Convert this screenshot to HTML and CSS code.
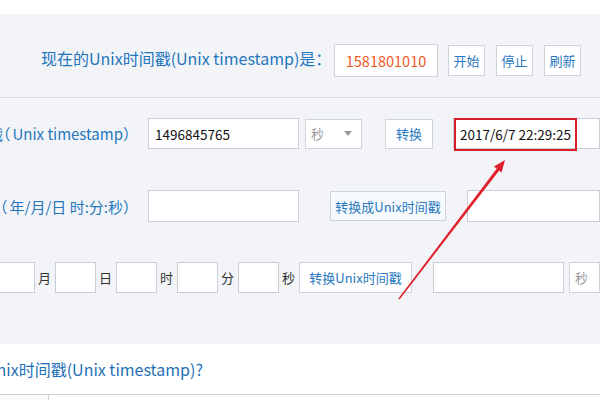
FILE: index.html
```html
<!DOCTYPE html>
<html lang="zh-CN">
<head>
<meta charset="utf-8">
<title>Unix时间戳</title>
<link rel="stylesheet" href="styles.css">
</head>
<body>
<div class="top-strip"></div>
<section class="panel">
  <div class="now-row">
    <span class="now-label">现在的Unix时间戳(Unix timestamp)是：</span>
    <div class="now-box">1581801010</div>
    <button class="btn small">开始</button>
    <button class="btn small">停止</button>
    <button class="btn small">刷新</button>
  </div>
  <div class="form">
    <div class="row row-ts">
      <div class="label"><span>Unix时间戳<span class="lp">（</span>Unix timestamp）</span></div>
      <div class="input w151">1496845765</div>
      <div class="select s57"><span>秒</span><i class="caret"></i></div>
      <button class="btn conv">转换</button>
      <div class="output">
        <div class="input out-in">2017/6/7 22:29:25</div>
        <div class="mark"></div>
      </div>
    </div>
    <div class="row row-date">
      <div class="label"><span>北京时间<span class="lp">（</span>年/月/日 时:分:秒）</span></div>
      <div class="input w151 h32"></div>
      <button class="btn wide">转换成Unix时间戳</button>
      <div class="input grow h32"></div>
    </div>
    <div class="row row-parts">
      <div class="clip"><span class="unit">年</span><div class="input part"></div></div>
      <span class="unit">月</span><div class="input part"></div>
      <span class="unit">日</span><div class="input part"></div>
      <span class="unit">时</span><div class="input part"></div>
      <span class="unit">分</span><div class="input part"></div>
      <span class="unit">秒</span>
      <button class="btn parts-btn">转换Unix时间戳</button>
      <div class="input w131"></div>
      <div class="select grow"><span>秒</span></div>
    </div>
  </div>
</section>
<section class="faq">
  <div class="faq-title"><span>什么是Unix时间戳(Unix timestamp)?</span></div>
  <div class="faq-table"><div class="faq-cell"></div><div class="faq-cell2"></div></div>
</section>
<svg class="arrow" width="600" height="400" viewBox="0 0 600 400">
  <polygon points="398.4,298.6 399.6,299.4 499.2,170.5 496.8,168.5" fill="#e0202b"/>
  <polygon points="505,160 501.6,172.4 493.9,166.6" fill="#e0202b"/>
</svg>
</body>
</html>
```

FILE: styles.css
```css
html, body {
  margin: 0;
  padding: 0;
}
body {
  width: 600px;
  height: 400px;
  overflow: hidden;
  position: relative;
  background: #ffffff;
  font-family: "Noto Sans CJK SC", "Noto Sans", sans-serif;
  color: #333;
}
.top-strip {
  height: 14px;
  background: #ffffff;
}
.panel {
  background: #f3f4f8;
  height: 330px;
}
.now-row {
  display: flex;
  align-items: center;
  padding: 30px 0 20px 41px;
  height: 33px;
  border-bottom: 1px solid #d6d9e0;
}
.now-label {
  font-size: 16px;
  color: #1f76bd;
  white-space: nowrap;
  width: 293px;
  padding-bottom: 5px;
}
.now-box {
  box-sizing: border-box;
  width: 104px;
  height: 33px;
  background: #fff;
  border: 1px solid #cfd3dc;
  color: #ee5a24;
  font-size: 14.5px;
  display: flex;
  align-items: center;
  justify-content: center;
  margin-right: 10px;
  flex-shrink: 0;
}
.btn {
  box-sizing: border-box;
  background: #fff;
  border: 1px solid #cfd3dc;
  color: #2a79be;
  font-family: "Noto Sans CJK SC", "Noto Sans", sans-serif;
  font-size: 13px;
  padding: 0;
  height: 31px;
  display: flex;
  align-items: center;
  justify-content: center;
  white-space: nowrap;
  flex-shrink: 0;
}
.btn.small {
  width: 37px;
  margin-right: 11px;
}
.form {
  padding-top: 20px;
}
.row {
  display: flex;
  align-items: center;
}
.row-ts {
  height: 31px;
}
.row-date {
  height: 32px;
  margin-top: 41px;
}
.row-parts {
  height: 31px;
  margin-top: 40px;
}
.label {
  width: 138px;
  margin-right: 10px;
  display: flex;
  justify-content: flex-end;
  overflow: hidden;
  white-space: nowrap;
  font-size: 15px;
  color: #2577bc;
  flex-shrink: 0;
}
.lp {
  font-feature-settings: "halt";
  margin-right: 2px;
}
.input {
  box-sizing: border-box;
  background: #fff;
  border: 1px solid #c9cdd7;
  height: 31px;
  font-size: 13.5px;
  color: #111;
  display: flex;
  align-items: center;
  padding-left: 6px;
  flex-shrink: 0;
  white-space: nowrap;
}
.h32 {
  height: 32px;
}
.w151 {
  width: 151px;
}
.w131 {
  width: 131px;
  margin-left: 21px;
}
.grow {
  flex: 1;
}
.select {
  box-sizing: border-box;
  background: #fff;
  border: 1px solid #cfd3dc;
  height: 30px;
  font-size: 13px;
  color: #999;
  display: flex;
  align-items: center;
  padding-left: 5px;
  flex-shrink: 0;
}
.s57 {
  width: 57px;
  margin-left: 6px;
  position: relative;
}
.caret {
  width: 0;
  height: 0;
  border-left: 4px solid transparent;
  border-right: 4px solid transparent;
  border-top: 5px solid #9a9a9a;
  margin-left: 20px;
}
.btn.conv {
  width: 48px;
  height: 30px;
  margin-left: 23px;
}
.output {
  position: relative;
  margin-left: 20px;
  flex: 1;
  height: 31px;
}
.out-in {
  width: 100%;
  padding-left: 6px;
}
.mark {
  position: absolute;
  left: 1px;
  top: 0;
  width: 123px;
  height: 33px;
  box-sizing: border-box;
  border: 2.5px solid #d5202a;
}
.btn.wide {
  width: 116px;
  height: 30px;
  margin-left: 31px;
  margin-right: 21px;
  background: #f6fafd;
}
.clip {
  width: 38px;
  display: flex;
  justify-content: flex-end;
  align-items: center;
  overflow: hidden;
  flex-shrink: 0;
  height: 31px;
}
.clip .part {
  margin-right: 3px;
}
.unit {
  font-size: 13px;
  color: #333;
  width: 13px;
  margin-right: 4px;
  flex-shrink: 0;
}
.part {
  width: 41px;
  margin-right: 3px;
}
.btn.parts-btn {
  width: 113px;
  height: 31px;
  margin-left: 0;
}
.row-parts .select {
  margin-left: 5px;
  height: 31px;
}
.faq {
  height: 56px;
}
.faq-title {
  height: 50px;
  width: 203px;
  display: flex;
  justify-content: flex-end;
  align-items: center;
  overflow: hidden;
  white-space: nowrap;
  font-size: 16px;
  color: #1f70b8;
}
.faq-table {
  display: flex;
  border-top: 1px solid #cfd2d8;
  height: 6px;
}
.faq-cell {
  width: 48px;
  border-right: 1px solid #cfd2d8;
  background: #f9f9f9;
}
.faq-cell2 {
  flex: 1;
}
.arrow {
  position: absolute;
  left: 0;
  top: 0;
  pointer-events: none;
}
```
